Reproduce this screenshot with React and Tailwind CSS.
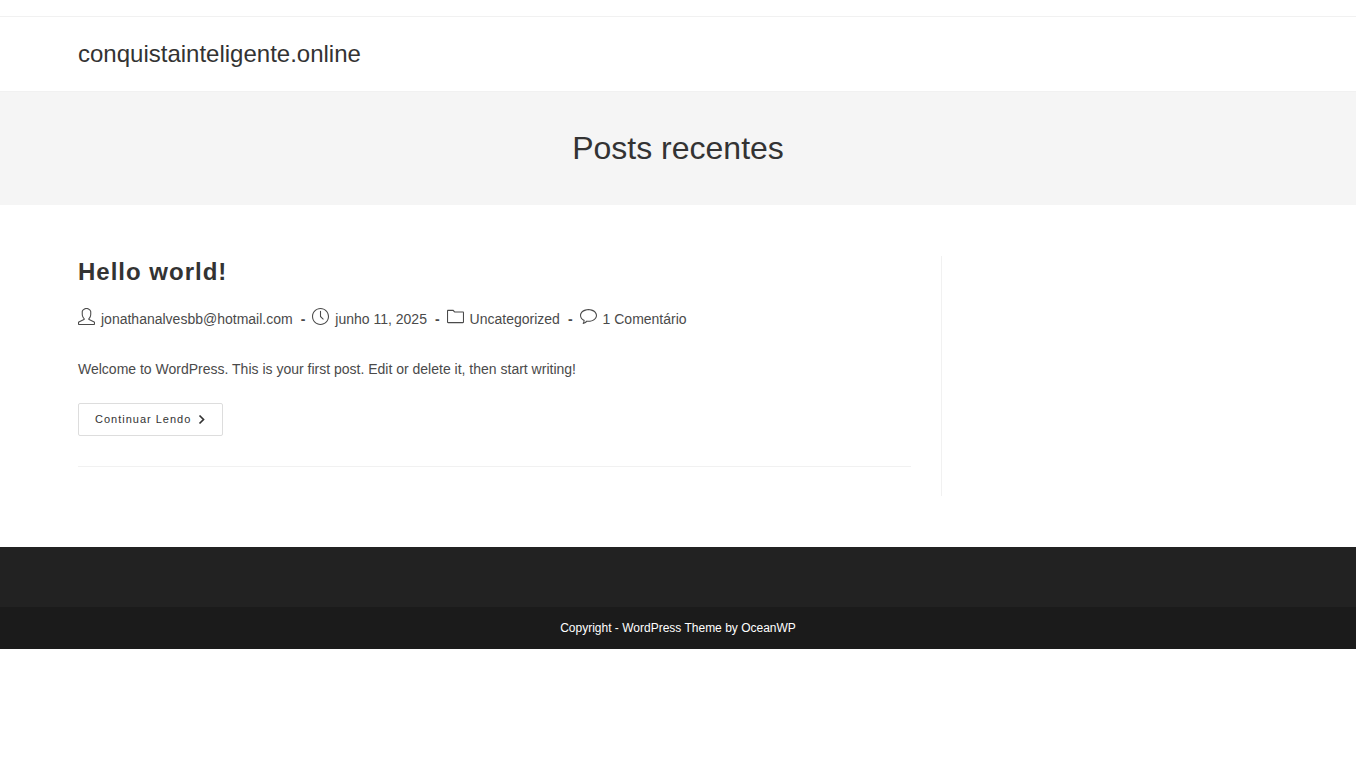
import React from 'react';
import { SlUser, SlClock, SlFolder, SlBubble } from 'react-icons/sl';

const META = [
    { icon: SlUser, label: 'jonathanalvesbb@hotmail.com', link: true },
    { icon: SlClock, label: 'junho 11, 2025' },
    { icon: SlFolder, label: 'Uncategorized', link: true },
    { icon: SlBubble, label: '1 Comentário', link: true },
];

const Header = () => (
    <header>
        <div className="h-4"></div>
        <div className="border-y border-[#f1f1f1]">
            <div className="max-w-[1200px] mx-auto h-[74px] flex items-center">
                <a href="#" className="text-2xl text-[#333]">conquistainteligente.online</a>
            </div>
        </div>
    </header>
);

const PostMeta = () => (
    <ul className="flex flex-wrap mt-5 text-sm leading-5">
        {META.map(({ icon: Icon, label, link }, i) => (
            <li key={label} className="flex items-center">
                <Icon className="w-[17px] h-[17px] mr-1.5 mb-1" />
                {link ? <a href="#">{label}</a> : <span>{label}</span>}
                {i < META.length - 1 && <span className="ml-2 mr-[7px] font-bold">-</span>}
            </li>
        ))}
    </ul>
);

const Post = () => (
    <article className="pb-[30px] border-b border-[#f1f1f1]">
        <h2 className="text-2xl leading-8 font-bold tracking-[1px] text-[#333]">
            <a href="#">Hello world!</a>
        </h2>
        <PostMeta />
        <p className="mt-7 text-sm leading-6">
            Welcome to WordPress. This is your first post. Edit or delete it, then start writing!
        </p>
        <a
            href="#"
            className="inline-flex items-center h-[33px] mt-[22px] px-4 border border-[#ddd] rounded-xs text-[11px] tracking-[1px] text-[#333]"
        >
            Continuar Lendo
            <svg viewBox="0 0 8 12" className="w-2 h-3 ml-[7px]" fill="none" stroke="currentColor" strokeWidth="1.7">
                <path d="M1.5 1.5 L5.5 5.5 L1.5 9.5" />
            </svg>
        </a>
    </article>
);

const App = () => {
    return (
        <div className="pr-[10px] bg-white font-['Liberation_Sans',Arial,sans-serif] text-[#4a4a4a]">
            <Header />

            <div className="bg-[#f5f5f5] py-9 text-center">
                <h1 className="text-[32px] leading-[41px] text-[#333]">Posts recentes</h1>
            </div>

            <main className="max-w-[1200px] mx-auto py-[51px] flex">
                <div className="w-[72%] pr-[30px] pb-[29px] border-r border-[#f1f1f1]">
                    <Post />
                </div>
                <aside className="w-[28%] pl-[30px]"></aside>
            </main>

            <footer>
                <div className="h-[60px] bg-[#222]"></div>
                <div className="bg-[#1b1b1b] py-3 text-center text-xs leading-[18px] text-white">
                    Copyright - <a href="#">WordPress Theme by OceanWP</a>
                </div>
            </footer>
        </div>
    );
};

export default App;
